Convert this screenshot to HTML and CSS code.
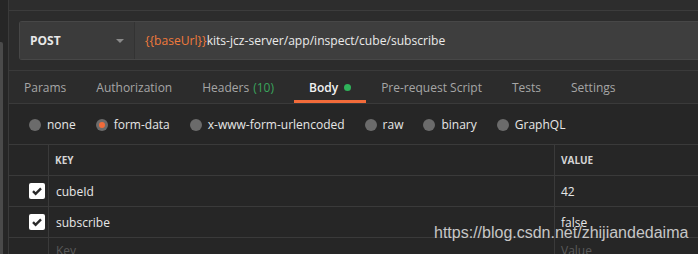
FILE: index.html
```html
<!DOCTYPE html>
<html>
<head>
<meta charset="utf-8">
<link rel="stylesheet" href="styles.css">
</head>
<body>
<div class="app">
  <div class="sidebar"><div class="thumb"></div></div>
  <div class="main">
    <div class="topbar"></div>
    <div class="urlrow">
      <div class="urlbox">
        <div class="method"><span class="method-name">POST</span><span class="caret"></span></div>
        <div class="url"><span class="var">{{baseUrl}}</span>kits-jcz-server/app/inspect/cube/subscribe</div>
      </div>
    </div>
    <div class="tabs">
      <div class="tab">Params</div>
      <div class="tab">Authorization</div>
      <div class="tab headers">Headers <span class="count">(10)</span></div>
      <div class="tab active">Body <span class="dot"></span></div>
      <div class="tab">Pre-request Script</div>
      <div class="tab">Tests</div>
      <div class="tab">Settings</div>
    </div>
    <div class="radios">
      <label class="radio"><span class="circle"></span>none</label>
      <label class="radio"><span class="circle on"></span>form-data</label>
      <label class="radio"><span class="circle"></span>x-www-form-urlencoded</label>
      <label class="radio"><span class="circle"></span>raw</label>
      <label class="radio"><span class="circle"></span>binary</label>
      <label class="radio"><span class="circle"></span>GraphQL</label>
    </div>
    <div class="table">
      <div class="row head">
        <div class="c-check"></div>
        <div class="c-key">KEY</div>
        <div class="c-val">VALUE</div>
      </div>
      <div class="row">
        <div class="c-check"><span class="cb"><svg width="16" height="16" viewBox="0 0 16 16"><path d="M4 8.2l2.6 2.6L12 5.4" fill="none" stroke="#2a2a2a" stroke-width="2.4"/></svg></span></div>
        <div class="c-key">cubeId</div>
        <div class="c-val">42</div>
      </div>
      <div class="row">
        <div class="c-check"><span class="cb"><svg width="16" height="16" viewBox="0 0 16 16"><path d="M4 8.2l2.6 2.6L12 5.4" fill="none" stroke="#2a2a2a" stroke-width="2.4"/></svg></span></div>
        <div class="c-key">subscribe</div>
        <div class="c-val">false</div>
      </div>
      <div class="row placeholder">
        <div class="c-check"></div>
        <div class="c-key">Key</div>
        <div class="c-val">Value</div>
      </div>
    </div>
  </div>
</div>
<div class="watermark">https://blog.csdn.net/zhijiandedaima</div>
</body>
</html>
```
FILE: styles.css
```css
html, body {
  margin: 0;
  padding: 0;
  width: 698px;
  height: 254px;
  overflow: hidden;
  background: #262626;
  font-family: "Open Sans", "DejaVu Sans", sans-serif;
}
.app {
  display: flex;
  height: 254px;
}
.sidebar {
  width: 9px;
  flex: none;
  background: #262626;
  border-right: 1px solid #3a3a3a;
  padding-top: 42px;
  box-sizing: border-box;
}
.thumb {
  width: 3px;
  height: 220px;
  background: #4a4a4a;
  border-radius: 0 2px 0 0;
}
.main {
  flex: 1;
  display: flex;
  flex-direction: column;
  overflow: hidden;
}
.main > * {
  flex: none;
}
.topbar {
  height: 10px;
  background: #2d2d2d;
  border-bottom: 1px solid #3c3c3c;
}
.urlrow {
  background: #2c2c2c;
  padding: 10px 0 10px 10px;
  border-bottom: 1px solid #3a3a3a;
}
.urlbox {
  display: flex;
  height: 39px;
  box-sizing: border-box;
  border: 1px solid #474747;
  border-right: none;
  border-radius: 3px 0 0 3px;
  background: #3c3c3c;
}
.method {
  width: 115px;
  flex: none;
  display: flex;
  align-items: center;
  justify-content: space-between;
  padding: 0 10px 0 10px;
  box-sizing: border-box;
  border-right: 1px solid #333;
  background: #3b3b3b;
}
.method-name {
  color: #e8e8e8;
  font-weight: 700;
  font-size: 12px;
}
.caret {
  width: 0;
  height: 0;
  border-left: 4px solid transparent;
  border-right: 4px solid transparent;
  border-top: 4px solid #8a8a8a;
}
.url {
  display: flex;
  align-items: center;
  padding-left: 10px;
  color: #eaeaea;
  font-size: 12.1px;
  background: #3e3e3e;
  flex: 1;
}
.var {
  color: #f07a3c;
}
.tabs {
  display: flex;
  height: 32px;
  background: #2c2c2c;
  border-bottom: 1px solid #3a3a3a;
}
.tab {
  display: flex;
  align-items: center;
  padding: 0 15px;
  color: #a6a6a6;
  font-size: 12px;
  white-space: nowrap;
  box-sizing: border-box;
}
.tab.headers {
  padding-right: 20px;
}
.count {
  color: #3aa45c;
  margin-left: 4px;
}
.tab.active {
  color: #f2f2f2;
  font-weight: 600;
  border-bottom: 3px solid #f26b3a;
  padding-top: 3px;
}
.dot {
  display: inline-block;
  width: 7px;
  height: 7px;
  border-radius: 50%;
  background: #2fb35a;
  margin-left: 6px;
}
.radios {
  display: flex;
  align-items: center;
  height: 40px;
  padding-left: 20px;
  padding-top: 1px;
  box-sizing: border-box;
  background: #262626;
}
.radio {
  display: flex;
  align-items: center;
  color: #e6e6e6;
  font-size: 12px;
  margin-right: 20px;
}
.circle {
  width: 12px;
  height: 12px;
  border-radius: 50%;
  background: #6b6b6b;
  margin-right: 6px;
  display: flex;
  align-items: center;
  justify-content: center;
}
.circle.on::after {
  content: "";
  width: 6px;
  height: 6px;
  border-radius: 50%;
  background: #f26b3a;
}
.table {
  border-top: 1px solid #3a3a3a;
  background: #262626;
}
.row {
  display: flex;
  height: 31px;
  border-bottom: 1px solid #3a3a3a;
  box-sizing: border-box;
}
.c-check {
  width: 40px;
  flex: none;
  border-right: 1px solid #3a3a3a;
  display: flex;
  align-items: center;
  padding-left: 20px;
  box-sizing: border-box;
}
.c-key {
  width: 506px;
  flex: none;
  border-right: 1px solid #3a3a3a;
  display: flex;
  align-items: center;
  padding-left: 7px;
  color: #e6e6e6;
  font-size: 12px;
  box-sizing: border-box;
}
.c-val {
  flex: 1;
  display: flex;
  align-items: center;
  padding-left: 6px;
  color: #e6e6e6;
  font-size: 12px;
}
.head .c-key, .head .c-val {
  font-size: 10px;
  font-weight: 700;
  color: #d4d4d4;
  padding-left: 6px;
}
.cb {
  width: 16px;
  height: 16px;
  background: #ffffff;
  border-radius: 2px;
  display: block;
}
.cb svg { display: block; }
.placeholder .c-key, .placeholder .c-val {
  color: #5a5a5a;
  align-items: flex-start;
  padding-top: 4px;
}
.watermark {
  position: absolute;
  left: 434px;
  top: 224px;
  font-family: "Liberation Sans", Arial, sans-serif;
  font-size: 16px;
  color: #c6c6c6;
  white-space: nowrap;
}
```
